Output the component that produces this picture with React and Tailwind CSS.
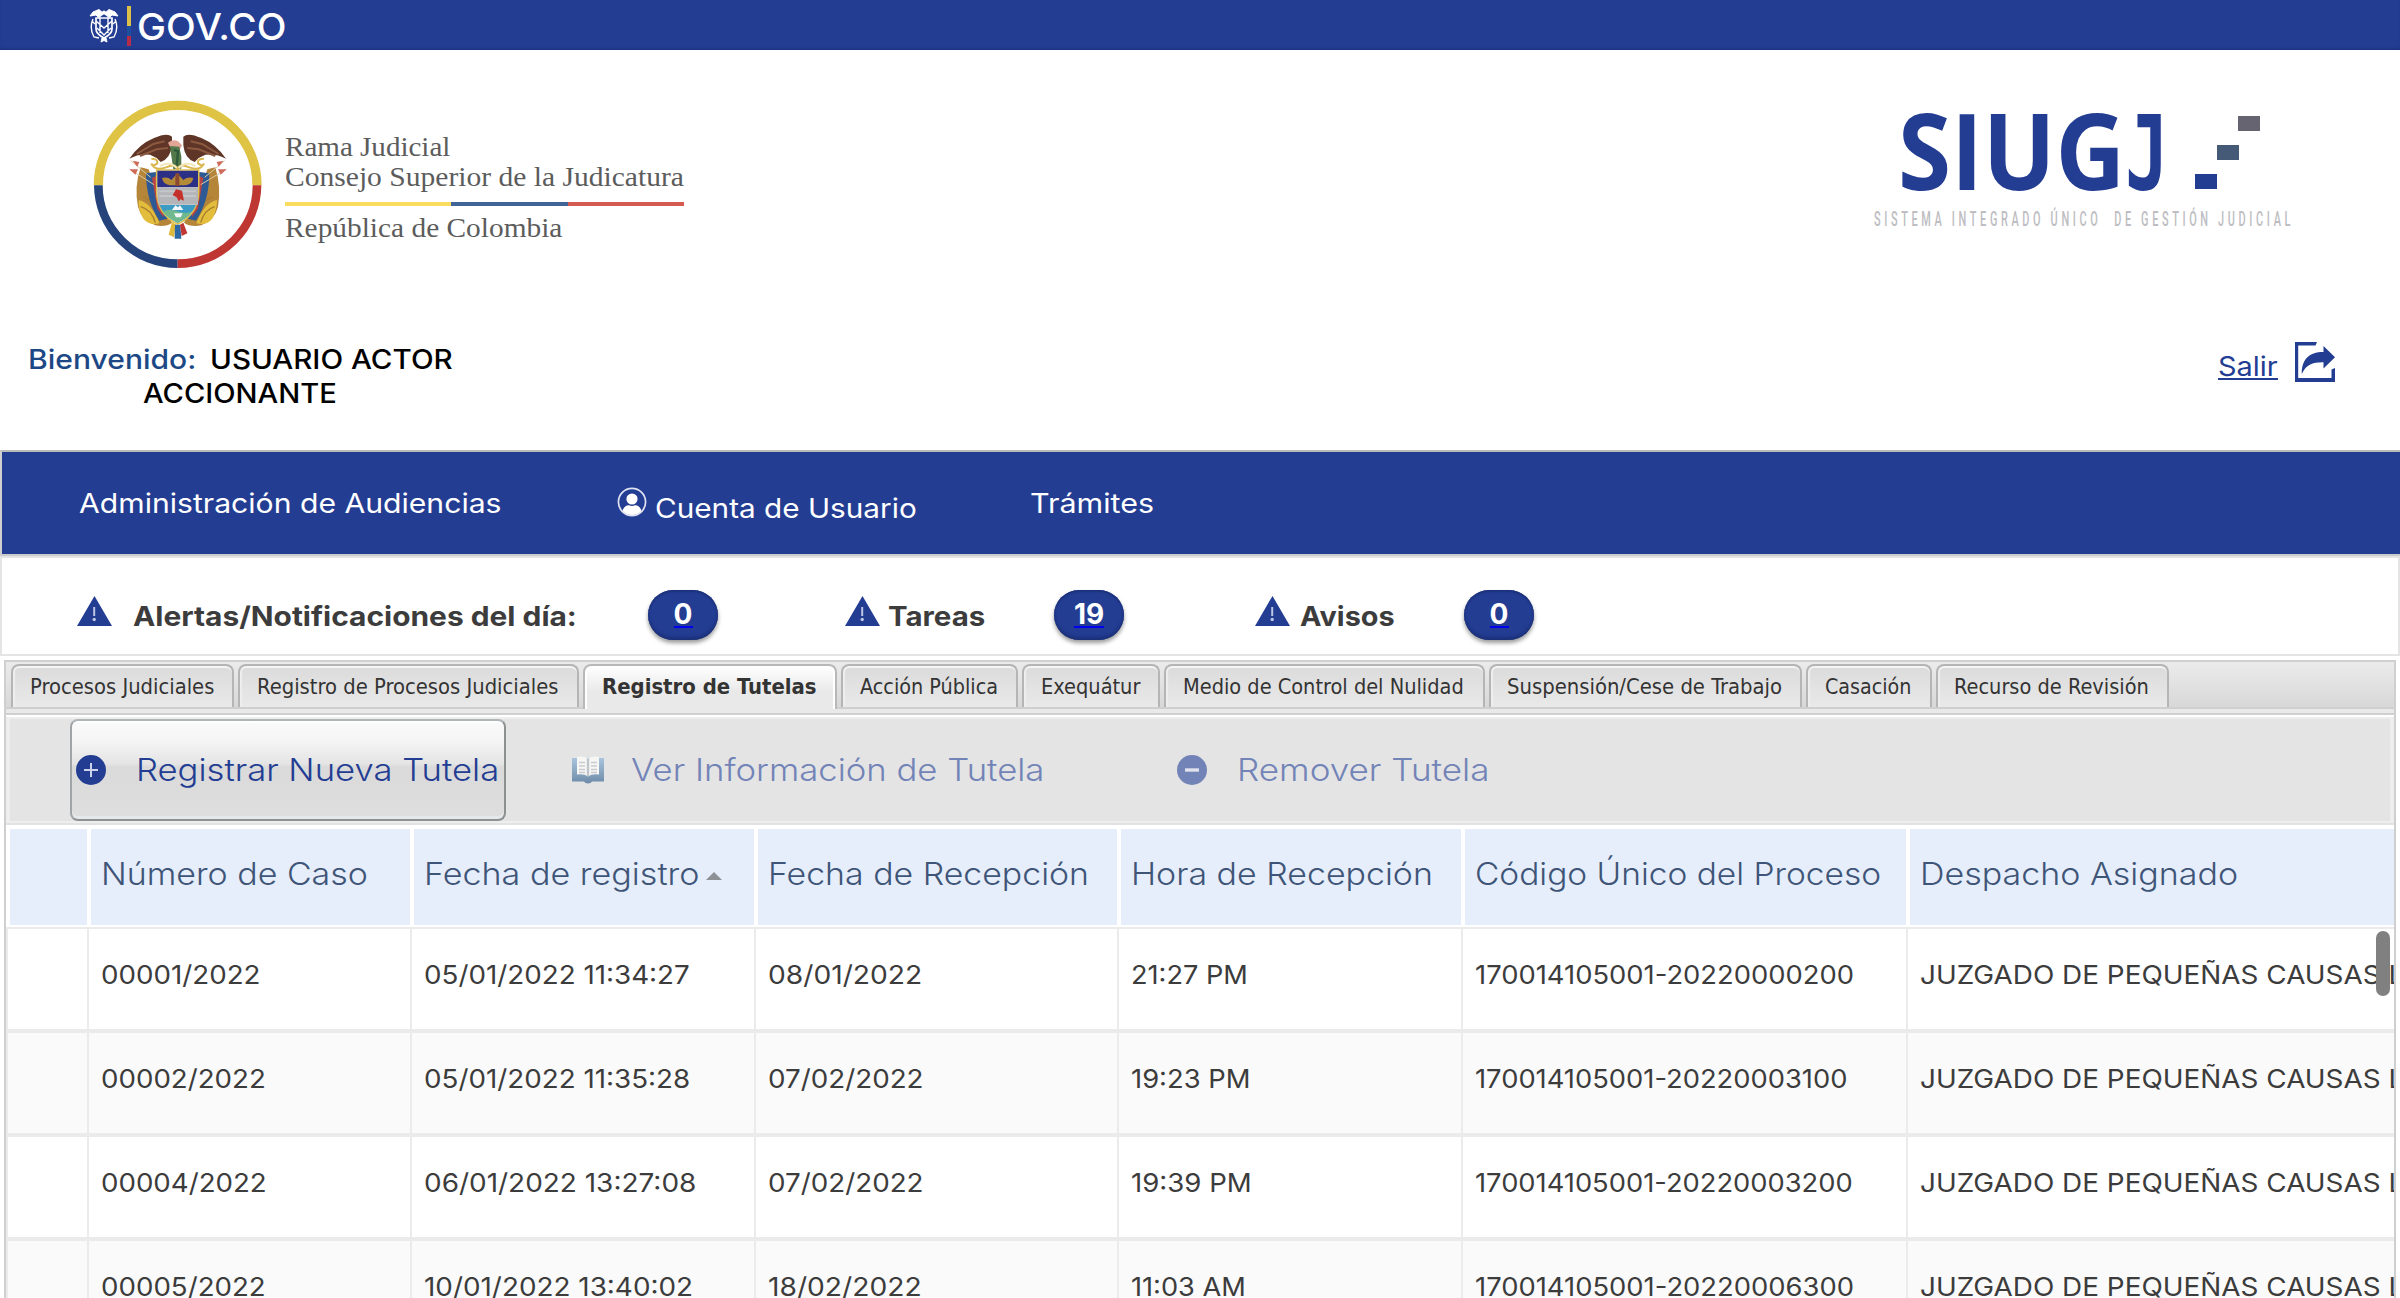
import { useLayoutEffect, useRef } from "react";

// Text whose run is stretched horizontally to fill the width of its box.
function Fit({ children, className = "" }) {
  const outer = useRef(null);
  const inner = useRef(null);
  useLayoutEffect(() => {
    const scale = outer.current.clientWidth / inner.current.offsetWidth;
    inner.current.style.transform = `scaleX(${scale})`;
  }, [children]);
  return (
    <span ref={outer} className={`block shrink-0 whitespace-pre ${className}`}>
      <span ref={inner} className="inline-block origin-left">{children}</span>
    </span>
  );
}

function GovShield() {
  return (
    <svg viewBox="0 0 30 36" className="h-9 w-[30px]" fill="none" stroke="#fff" strokeWidth="1.7">
      <path d="M15 6 10 1.5 4 4 1 8l6-1 3 3M15 6l5-4.500 6 2.500 3 4-6-1-3 3" fill="#fff" strokeWidth="1" />
      <circle cx="15" cy="4.500" r="2" fill="#fff" stroke="none" />
      <path d="M7 10h16v11q0 5-8 9-8-4-8-9Z" />
      <path d="M4 11Q0 20 5 29l5 1M26 11q4 9-1 18l-5 1M7 13l8 7 8-7M8 20l7 7 7-7M11 10v15M19 10v15M3 13l3 3M27 13l-3 3" strokeWidth="1.400" />
      <path d="m13 30-1 4 3-1.500 3 1.500-1-4" fill="#fff" strokeWidth="1" />
    </svg>
  );
}

function Emblem() {
  return (
    <svg viewBox="0 0 600 570" className="h-[190px] w-[200px] shrink-0">
      <g fill="none" strokeWidth="26">
        <path d="M55 286A238 240 0 0 1 531 286" stroke="#dfc345" strokeWidth="28" />
        <path d="M55 286A238 236 0 0 0 293 521" stroke="#26437b" />
        <path d="M531 286A238 236 0 0 1 293 521" stroke="#bf3733" />
      </g>
      {/* draped flags */}
      <path d="M182 232Q162 290 174 350q10 40 52 56 32 6 50-8l-50-100-20-60Z" fill="#b5853a" />
      <path d="M406 232q18 58 8 118-10 40-50 56-32 6-52-8l50-100 20-60Z" fill="#b5853a" />
      <path d="M176 330q40 10 62 70-30 8-48-14Q174 362 176 330ZM411 330q-40 10-62 70 30 8 48-14 14-24 14-56Z" fill="#e3bd3c" />
      <path d="M182 350q34 10 44 48M404 350q-32 10-42 48M190 320q40 20 62 70M396 320q-40 20-62 70" stroke="#a87f2f" strokeWidth="4" fill="none" />
      <path d="m198 250 30-4 34 140-24 6q-40-60-40-142Z" fill="#2d5a94" />
      <path d="m388 250-30-4-34 140 24 6q40-60 40-142Z" fill="#2d5a94" />
      <path d="m216 264 16 92 18 26-2-60-20-64ZM370 264l-16 92-18 26 2-60 20-64Z" fill="#b94443" />
      {/* spears */}
      <path d="m152 212 60 50M434 212l-60 50M150 238l72 46M438 238l-76 46" stroke="#dccaa6" strokeWidth="3" />
      <path d="m158 212 20 4-6 14ZM430 212l-20 4 6 14ZM148 238l26 0-8 16ZM440 238l-26 0 8 16Z" fill="#cf6a5b" />
      {/* shield */}
      <path d="M230 240h126v62q0 70-63 100-63-30-63-100Z" fill="#fff" stroke="#ddc04f" strokeWidth="5" />
      <path d="M232 242h122v50H232Z" fill="#2c2f86" />
      <path d="M232 292h122v52H236q-4-20-4-52Z" fill="#b3b5b8" />
      <path d="M238 304h110M238 318h110" stroke="#c4c6c9" strokeWidth="6" />
      <path d="M238 345h110q-14 34-55 54-41-20-55-54Z" fill="#3c9bc4" />
      <path d="M248 366q20-12 45-2t44 0l-16 18-28 16-28-16Z" fill="#70b98f" />
      <path d="m276 360 10-14 8 6 6-6 10 14ZM282 370h26l-6 12h-14Z" fill="#f2f7f9" />
      <path d="M246 264q18-4 28 6l18-20 18 20q12-10 30-6-4 20-24 22h-46q-20-2-24-22Z" fill="#b38a35" />
      <path d="M286 250h12v38h-12Z" fill="#8c4b31" />
      <path d="m278 316 10-18 18 4 6 30-10-4-6 6-6-12Z" fill="#c4302c" />
      {/* condor */}
      <path d="M148 206q30-44 74-62 40-18 54-4l0 26q-4 40-34 50l-12-12-20-10q-34-4-62 12Z" fill="#5e3526" />
      <path d="M438 206q-30-44-74-62-40-18-54-4l0 26q4 40 34 50l12-12 20-10q34-4 62 12Z" fill="#5e3526" />
      <path d="m170 192 50-30 34-8M180 198l50-20 34-4M416 192l-50-30-34-8M406 198l-50-20-34-4" stroke="#8b5a40" strokeWidth="6" fill="none" />
      <path d="M264 158q24-18 42 8l-10 20-16 0q-10-14-16-28Z" fill="#e2a596" />
      <path d="m270 168 28 2 6 30 0 36-24 2-6-40Z" fill="#53794b" />
      <path d="m282 180 12 4-4 46" stroke="#2e5a3a" strokeWidth="7" fill="none" />
      {/* scroll and horns */}
      <path d="M214 206q20 0 18 14-14 10-18 2M214 220q10 24 44 12 34-14 34 8M372 206q-20 0-18 14 14 10 18 2M372 220q-10 24-44 12-34-14-34 8" stroke="#d9b64e" strokeWidth="6" fill="none" />
      <path d="M240 228q30-16 50 6M346 228q-30-16-50 6" stroke="#f2e7bd" strokeWidth="6" fill="none" />
      {/* ribbon */}
      <path d="m276 396 12 8-6 38-16-8Z" fill="#dfb93b" />
      <path d="M285 404h16l3 42h-20Z" fill="#2d68a6" />
      <path d="m300 404 10-6 12 32-17 8Z" fill="#bf3733" />
    </svg>
  );
}

function ExitIcon() {
  return (
    <svg viewBox="0 0 40 40" className="h-10 w-10" fill="#233d93">
      <path d="M0 0h22L20.500 3.500H3.200V36h33.300V27.500L40 26v14H0Z" />
      <path d="M28.500 4 40 15.300 28.500 26.500v-6.300C18 20 11 22.500 6.800 32 6.500 18 13.500 10 28.500 10Z" />
    </svg>
  );
}

function UserIcon() {
  return (
    <svg viewBox="0 0 30 30" className="h-[30px] w-[30px]">
      <circle cx="15" cy="15" r="13.600" fill="none" stroke="#dfe3f1" strokeWidth="1.700" />
      <circle cx="15" cy="12" r="5.600" fill="#fff" />
      <path d="M5.500 24Q7 18.500 12 18.300q3 1.500 6 0 5 .2 6.500 5.700Q20.500 28 15 28T5.500 24Z" fill="#fff" />
    </svg>
  );
}

function WarningIcon({ className }) {
  return (
    <svg viewBox="0 0 35 30" className={`h-[30px] w-[35px] shrink-0 ${className}`}>
      <path d="M17.500 0 35 30H0Z" fill="#233d93" />
      <path d="M17.200 11v9" stroke="#bcc5e2" strokeWidth="2" />
      <circle cx="17.200" cy="23.500" r="1.700" fill="#bcc5e2" />
    </svg>
  );
}

function RoundIcon({ minus, className }) {
  return (
    <svg viewBox="0 0 30 30" className={`h-[30px] w-[30px] shrink-0 ${className}`}>
      <circle cx="15" cy="15" r="15" fill={minus ? "#7283b7" : "#233d93"} />
      {minus ? (
        <path d="M8 15h14" stroke="#dfe3ee" strokeWidth="3.400" />
      ) : (
        <path d="M8 15h14M15 8v14" stroke="#ccd3ea" strokeWidth="2" />
      )}
    </svg>
  );
}

function BookIcon() {
  return (
    <svg viewBox="0 0 32 28" className="ml-[66px] h-7 w-8 shrink-0">
      <defs>
        <linearGradient id="cover" x1="0" y1="0" x2="0" y2="1">
          <stop offset="0" stopColor="#a9c4dc" />
          <stop offset="1" stopColor="#6d8ba9" />
        </linearGradient>
      </defs>
      <path d="M0 2h32v23.500H20q-1 2-4 2t-4-2H0Z" fill="url(#cover)" />
      <path d="M5 1q7-1.500 11 2 4-3.500 11-2v17.500q-7-1-11 2-4-3-11-2Z" fill="#f6f6f4" />
      <path d="M16 3v17" stroke="#bfc5cb" strokeWidth="2.400" />
      <path d="M7 6.500h6M7 10h6M7 13.500h6M7 16.500h6M19 6.500h6M19 10h6M19 13.500h6M19 16.500h6" stroke="#c9cccf" strokeWidth="1.500" />
    </svg>
  );
}

function Badge({ className, textClass, children }) {
  return (
    <a className={`flex h-[50px] w-[70px] shrink-0 justify-center rounded-[25px] bg-[#233d93] shadow-[inset_0_-3px_3px_#1c3179,inset_0_2px_2px_#1c3179,0_3px_4px_rgba(0,0,0,0.4)] ${className}`}>
      <span className="mt-[7px] block h-[31px] border-b-2 border-[#0000ee] text-[28px] leading-[34px] font-bold text-white">
        <Fit className={textClass}>{children}</Fit>
      </span>
    </a>
  );
}

const tabs = [
  ["Procesos Judiciales", "w-[223px]", "w-[184px]"],
  ["Registro de Procesos Judiciales", "w-[341px]", "w-[302px]"],
  ["Registro de Tutelas", "w-[254px]", "w-[215px]"],
  ["Acción Pública", "w-[177px]", "w-[138px]"],
  ["Exequátur", "w-[138px]", "w-[99px]"],
  ["Medio de Control del Nulidad", "w-[321px]", "w-[281px]"],
  ["Suspensión/Cese de Trabajo", "w-[313px]", "w-[275px]"],
  ["Casación", "w-[126px]", "w-[86px]"],
  ["Recurso de Revisión", "w-[233px]", "w-[195px]"],
];

const columns = [
  ["Número de Caso", "w-[319px]", "w-[267px]"],
  ["Fecha de registro", "w-[340px]", "w-[275px]"],
  ["Fecha de Recepción", "w-[359px]", "w-[321px]"],
  ["Hora de Recepción", "w-[340px]", "w-[302px]"],
  ["Código Único del Proceso", "w-[441px]", "w-[406px]"],
  ["Despacho Asignado", "w-[484px]", "w-[318px]"],
];

const office = ["JUZGADO DE PEQUEÑAS CAUSAS L", "w-[484px]"];
const cellWidths = ["w-[323px]", "w-[344px]", "w-[363px]", "w-[344px]", "w-[445px]", "w-[490px]"];

const rows = [
  [["00001/2022", "w-[160px]"], ["05/01/2022 11:34:27", "w-[266px]"], ["08/01/2022", "w-[154px]"], ["21:27 PM", "w-[117px]"], ["170014105001-20220000200", "w-[379px]"], office],
  [["00002/2022", "w-[165px]"], ["05/01/2022 11:35:28", "w-[266px]"], ["07/02/2022", "w-[156px]"], ["19:23 PM", "w-[120px]"], ["170014105001-20220003100", "w-[372px]"], office],
  [["00004/2022", "w-[166px]"], ["06/01/2022 13:27:08", "w-[272px]"], ["07/02/2022", "w-[156px]"], ["19:39 PM", "w-[121px]"], ["170014105001-20220003200", "w-[378px]"], office],
  [["00005/2022", "w-[165px]"], ["10/01/2022 13:40:02", "w-[269px]"], ["18/02/2022", "w-[154px]"], ["11:03 AM", "w-[115px]"], ["170014105001-20220006300", "w-[379px]"], office],
];

function Header() {
  return (
    <>
      <div className="flex h-[50px] items-center bg-[#233d93] pl-[89px] shadow-[inset_0_-3px_2px_-1px_#1f3584]">
        <div className="pt-0.5"><GovShield /></div>
        <div className="mt-0.5 ml-2 flex h-10 w-1 flex-col">
          <span className="h-1/2 bg-[#dcc04a]" />
          <span className="h-1/4 bg-[#1d4fa0]" />
          <span className="h-1/4 bg-[#b52c4b]" />
        </div>
        <Fit className="mt-[3px] ml-1.5 w-[149px] text-[37px] leading-10 font-medium text-white">GOV.CO</Fit>
      </div>

      <div className="flex h-[280px] justify-between pl-20">
        <div className="flex pt-10">
          <Emblem />
          <div className="ml-[5px] pt-[42px] font-['Liberation_Serif',serif] text-[28px] leading-[30px] text-[#5c5c5c]">
            <Fit className="w-[165px]">Rama Judicial</Fit>
            <Fit className="w-[399px]">Consejo Superior de la Judicatura</Fit>
            <div className="mt-2.5 flex h-1 w-[399px]">
              <span className="w-[166px] bg-[#fadc5f]" />
              <span className="w-[117px] bg-[#3f6498]" />
              <span className="flex-1 bg-[#d55a50]" />
            </div>
            <Fit className="mt-[7px] w-[277px]">República de Colombia</Fit>
          </div>
        </div>
        <div className="w-[526px] pt-[64px]">
          <div className="flex h-[76px] items-start pl-6">
            <Fit className="-mt-[3px] w-[227px] font-['Open_Sans',sans-serif] text-[106px] leading-[76px] font-bold text-[#233d93]">SIUG</Fit>
            <Fit className="mt-0.5 w-[44px] font-['DejaVu_Sans_Mono',monospace] text-[104px] leading-[76px] font-bold text-[#233d93]">J</Fit>
            <div className="mt-0.5 ml-[26px] flex h-[73px] w-[65px] flex-col justify-between">
              <span className="ml-[43px] h-[15px] w-[22px] bg-[#666471]" />
              <span className="ml-[22px] h-[15px] w-[22px] bg-[#455a76]" />
              <span className="h-[15px] w-[22px] bg-[#233d93]" />
            </div>
          </div>
          <Fit className="mt-[19px] w-[420px] font-['Roboto',sans-serif] text-[21px] leading-[20px] font-medium tracking-[7px] text-[#bdbdc2]">SISTEMA INTEGRADO ÚNICO  DE GESTIÓN JUDICIAL</Fit>
        </div>
      </div>

      <div className="flex h-[120px] justify-between">
        <div className="w-[480px] pt-[13px] text-[27px] leading-[34px] font-medium text-black">
          <div className="flex pl-7">
            <Fit className="w-[168px] text-[#1d4886]">Bienvenido:</Fit>
            <Fit className="ml-[14px] w-[243px]">USUARIO ACTOR</Fit>
          </div>
          <Fit className="ml-[143px] w-[194px]">ACCIONANTE</Fit>
        </div>
        <div className="flex pt-3 pr-[65px]">
          <div className="mt-[7px] mr-[17px] h-[31px] border-b-2 border-[#233d93] text-[27px] leading-[36px] text-[#233d93]">
            <Fit className="w-[60px]">Salir</Fit>
          </div>
          <ExitIcon />
        </div>
      </div>
    </>
  );
}

function Navigation() {
  return (
    <nav className="flex h-[106px] border-t-2 border-b-2 border-l-2 border-t-[#b9bbbb] border-b-[#cbcbcb] border-l-[#cfcfcf] bg-[#233d93] text-[27px] leading-[34px] text-white">
      <Fit className="mt-[35px] ml-[77px] w-[423px]">Administración de Audiencias</Fit>
      <div className="mt-[35px] ml-[115px]"><UserIcon /></div>
      <Fit className="mt-[40px] ml-2 w-[262px]">Cuenta de Usuario</Fit>
      <Fit className="mt-[35px] ml-[113px] w-[124px]">Trámites</Fit>
    </nav>
  );
}

function Alerts() {
  return (
    <div className="flex h-[100px] border-2 border-[#e4e4e4] bg-white text-[27px] leading-[34px] font-bold text-[#3c3c3c]">
      <WarningIcon className="mt-[38px] ml-[75px]" />
      <Fit className="mt-[42px] ml-[21px] w-[444px]">Alertas/Notificaciones del día:</Fit>
      <Badge className="mt-8 ml-[71px]" textClass="w-[19px]">0</Badge>
      <WarningIcon className="mt-[38px] ml-[127px]" />
      <Fit className="mt-[42px] ml-[8px] w-[97px]">Tareas</Fit>
      <Badge className="mt-8 ml-[69px]" textClass="w-[30px]">19</Badge>
      <WarningIcon className="mt-[38px] ml-[131px]" />
      <Fit className="mt-[42px] ml-[10px] w-[95px]">Avisos</Fit>
      <Badge className="mt-8 ml-[69px]" textClass="w-[19px]">0</Badge>
    </div>
  );
}

function Tabs() {
  return (
    <div className="h-[53px] border-b-2 border-[#cfcfcf] bg-[#e9e9e9]">
      <div className="flex h-[47px] gap-1 border-b-2 border-[#cfcfcf] bg-linear-to-b from-[#ebebeb] to-[#d8d8d8] pt-0.5 pl-[5px] font-['DejaVu_Sans_Condensed','DejaVu_Sans',sans-serif] text-[22px] leading-[41px] text-[#333]">
        {tabs.map(([label, width, textWidth], i) =>
          i === 2 ? (
            <div key={label} className={`relative -mb-0.5 flex h-[45px] shrink-0 justify-center rounded-t-lg border-2 border-b-0 border-[#b8b8b8] bg-linear-to-b from-white to-[#e9e9e9] to-60% pr-0.5 font-bold shadow-[inset_2px_0_0_#fff,inset_-2px_0_0_#fff] ${width}`}>
              <Fit className={textWidth}>{label}</Fit>
            </div>
          ) : (
            <div key={label} className={`flex shrink-0 justify-center rounded-t-lg border-2 border-b-0 border-[#b5b5b5] bg-linear-to-b from-[#dbdbdb] to-[#e9e9e9] pr-0.5 shadow-[inset_0_2px_0_#f4f4f4,inset_2px_0_1px_#eee] ${width}`}>
              <Fit className={textWidth}>{label}</Fit>
            </div>
          )
        )}
      </div>
    </div>
  );
}

function Toolbar() {
  return (
    <div className="h-[110px] border-t-2 border-b-2 border-t-white border-b-[#e2e2e2]">
      <div className="flex h-[106px] items-center border-2 border-x-4 border-[#eeeeee] bg-[#e4e4e4] pl-[60px] text-[31px] leading-10 font-[350]">
        <div className="flex h-[102px] w-[436px] shrink-0 items-center rounded-lg border-2 border-t-[#b0b5b8] border-r-[#8d9191] border-b-[#8d9191] border-l-[#a0a4a6] bg-[linear-gradient(#fafafa_0%,#f5f5f5_20%,#e4e4e4_44%,#dadada_47%,#dedede_100%)] shadow-[inset_0_2px_0_#fff,inset_0_-3px_0_#e6e9e9]">
          <RoundIcon className="-mt-px ml-1" />
          <Fit className="-mt-px ml-[30px] w-[363px] text-[#233d93]">Registrar Nueva Tutela</Fit>
        </div>
        <BookIcon />
        <Fit className="-mt-px ml-[27px] w-[414px] text-[#7283b7]">Ver Información de Tutela</Fit>
        <RoundIcon minus className="-mt-px ml-[132px]" />
        <Fit className="-mt-px ml-[30px] w-[252px] text-[#7283b7]">Remover Tutela</Fit>
      </div>
    </div>
  );
}

function Grid() {
  return (
    <div className="relative">
      <div className="flex h-[104px] gap-1 border-b-2 border-[#ebebeb] pt-1 pb-0.5 pl-1 text-[31px] leading-10 font-[270] text-[#3f5578]">
        <div className="w-[77px] shrink-0 bg-[#e6eefb]" />
        {columns.map(([label, width, textWidth], i) => (
          <div key={label} className={`flex shrink-0 overflow-hidden bg-[#e6eefb] pt-[25px] pl-2.5 ${width}`}>
            <Fit className={textWidth}>{label}</Fit>
            {i === 1 && (
              <svg viewBox="0 0 16 8" className="mt-[18px] ml-[7px] h-2 w-4" fill="#8d9094">
                <path d="M8 0l8 8H0Z" />
              </svg>
            )}
          </div>
        ))}
      </div>
      {rows.map((cells, r) => (
        <div key={r} className={`flex h-[104px] border-b-4 border-l-2 border-[#ebebeb] pl-[79px] ${r % 2 ? "bg-[#fafafa]" : "bg-white"}`}>
          {cells.map(([text, textWidth], c) => (
            <div key={c} className={`shrink-0 overflow-hidden border-l-2 border-[#ebebeb] pt-[29px] pl-3 text-[26px] leading-[34px] text-[#3c3c3c] ${cellWidths[c]}`}>
              <Fit className={textWidth}>{text}</Fit>
            </div>
          ))}
        </div>
      ))}
      <div className="absolute top-[106px] right-1 h-[65px] w-3.5 rounded-full bg-[#808080]" />
    </div>
  );
}

export default function App() {
  return (
    <div className="h-[1298px] w-[2400px] overflow-hidden bg-white font-['Inter',sans-serif]">
      <Header />
      <Navigation />
      <Alerts />
      <div className="mt-1 mr-1 ml-1 h-[700px] overflow-hidden border-2 border-[#cfcfcf]">
        <Tabs />
        <Toolbar />
        <Grid />
      </div>
    </div>
  );
}
